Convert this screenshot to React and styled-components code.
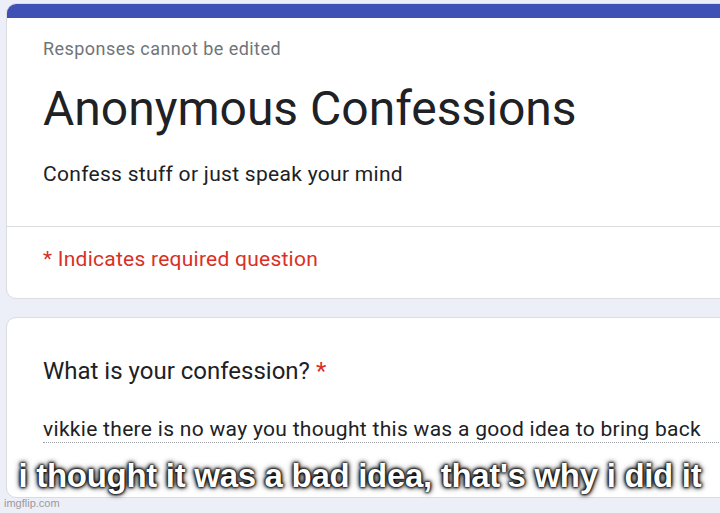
import React from "react";
import styled, { createGlobalStyle } from "styled-components";

const Global = createGlobalStyle`
  html, body { margin: 0; padding: 0; }
  body {
    background: #eceef8;
    width: 720px;
    height: 513px;
    overflow: hidden;
    font-family: Roboto, "Noto Sans", sans-serif;
  }
`;

const Page = styled.div`
  position: relative;
  width: 720px;
  height: 513px;
  overflow: hidden;
  padding: 3px 0 0 6px;
  box-sizing: border-box;
  display: flex;
  flex-direction: column;
  gap: 18px;
`;

const Card = styled.section`
  width: 760px;
  background: #fff;
  border: 1px solid #dadce0;
  border-radius: 10px;
  overflow: hidden;
  box-sizing: border-box;
  flex-shrink: 0;
  height: ${(p) => p.$h}px;
`;

const TopBar = styled.div`
  height: 14px;
  background: #3f51b5;
`;

const Section = styled.div`
  padding: ${(p) => p.$pad};
  display: flex;
  flex-direction: column;
`;

const Divider = styled.div`
  height: 1px;
  background: #dadce0;
  margin-top: ${(p) => p.$mt}px;
`;

const Note = styled.div`
  font-size: 18px;
  line-height: 24px;
  letter-spacing: 0.45px;
  color: #70757a;
`;

const Title = styled.h1`
  margin: 20px 0 0;
  font-weight: 400;
  font-size: 48px;
  line-height: 56px;
  color: #202124;
`;

const Desc = styled.div`
  margin-top: 23px;
  font-size: 21px;
  line-height: 28px;
  letter-spacing: 0.3px;
  color: #202124;
`;

const Required = styled.div`
  font-size: 21px;
  line-height: 28px;
  letter-spacing: 0.25px;
  color: #d93025;
`;

const Question = styled.div`
  font-size: 24px;
  line-height: 32px;
  letter-spacing: 0;
  color: #202124;
`;

const Star = styled.span`
  color: #d93025;
`;

const Answer = styled.div`
  margin-top: 29px;
  font-size: 21px;
  line-height: 26px;
  letter-spacing: 0.3px;
  color: #202124;
  border-bottom: 1px dotted #9aa0a6;
  white-space: nowrap;
`;

const Caption = styled.div`
  position: absolute;
  left: 0;
  right: 0;
  top: 456px;
  text-align: center;
  font-family: "Liberation Sans", Arial, sans-serif;
  font-weight: 700;
  font-size: 33px;
  line-height: 40px;
  color: #fff;
  white-space: nowrap;
  text-shadow: 0 0 2px #000, 0 0 3px #000, 0 0 4px #000, 0 0 6px #000;
  letter-spacing: -0.3px;
`;

const Watermark = styled.div`
  position: absolute;
  left: 4px;
  top: 497px;
  font-family: "Liberation Sans", Arial, sans-serif;
  font-size: 11px;
  color: #9a9a9a;
`;

export default function App() {
  return (
    <>
      <Global />
      <Page>
        <Card $h={296}>
          <TopBar />
          <Section $pad="19px 0 0 36px">
            <Note>Responses cannot be edited</Note>
            <Title>Anonymous Confessions</Title>
            <Desc>Confess stuff or just speak your mind</Desc>
          </Section>
          <Divider $mt={38} />
          <Section $pad="18px 0 0 36px">
            <Required>* Indicates required question</Required>
          </Section>
        </Card>
        <Card $h={181}>
          <Section $pad="37px 0 0 36px">
            <Question>
              What is your confession? <Star>*</Star>
            </Question>
            <Answer>
              vikkie there is no way you thought this was a good idea to bring back
            </Answer>
          </Section>
        </Card>
      </Page>
      <Caption>i thought it was a bad idea, that's why i did it</Caption>
      <Watermark>imgflip.com</Watermark>
    </>
  );
}
